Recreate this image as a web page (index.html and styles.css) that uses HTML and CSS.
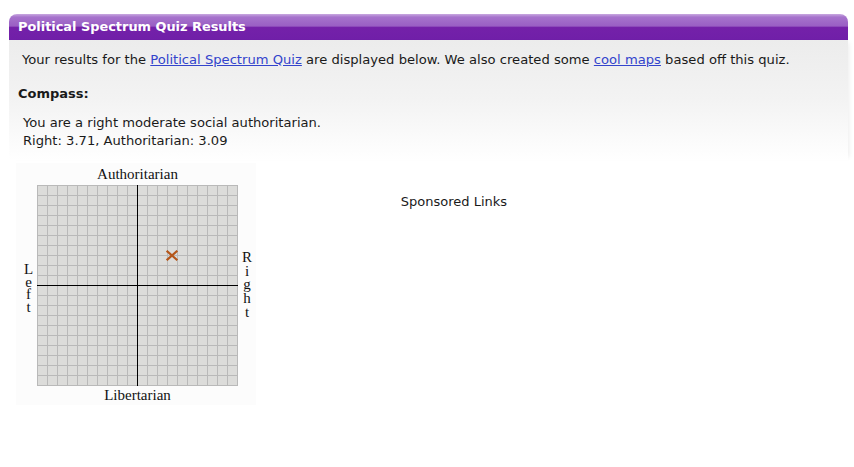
FILE: index.html
```html
<!DOCTYPE html>
<html>
<head>
<meta charset="utf-8">
<link rel="stylesheet" href="styles.css">
</head>
<body>
<div class="page">
  <div class="header">Political Spectrum Quiz Results</div>
  <div class="panel">
    <p class="intro">Your results for the <a href="#">Political Spectrum Quiz</a> are displayed below. We also created some <a href="#">cool maps</a> based off this quiz.</p>
    <h3 class="section">Compass:</h3>
    <p class="result">You are a right moderate social authoritarian.<br>Right: 3.71, Authoritarian: 3.09</p>
  </div>
  <div class="lower">
    <div class="compass">
      <div class="lbl-top">Authoritarian</div>
      <div class="lbl-left"><span class="vtext">Left</span></div>
      <div class="grid">
        <svg class="mark" width="12" height="11" viewBox="0 0 12 11"><path d="M1.5 1.5 L10.5 9.5 M10.5 1.5 L1.5 9.5" stroke="#b4561a" stroke-width="2.2" stroke-linecap="square" fill="none"/></svg>
      </div>
      <div class="lbl-right"><span class="vtext right">Right</span></div>
      <div class="lbl-bottom">Libertarian</div>
    </div>
    <div class="sponsored">Sponsored Links</div>
  </div>
</div>
</body>
</html>
```

FILE: styles.css
```css
html, body {
  margin: 0;
  padding: 0;
  background: #fff;
}
body {
  font-family: "DejaVu Sans", Verdana, sans-serif;
  font-size: 13px;
  color: #1a1a1a;
}
.page {
  padding: 14px 6px 0 9px;
}
.header {
  height: 26px;
  line-height: 26px;
  border-radius: 8px 8px 0 0;
  background: linear-gradient(to bottom, #c8a8e0 0%, #a673cc 12%, #9a5fc4 46%, #7421a9 52%, #701fa8 100%);
  color: #fff;
  font-weight: bold;
  font-size: 12.9px;
  padding-left: 9px;
}
.panel {
  height: 120px;
  background: linear-gradient(to bottom, #ececec 0%, #f3f3f3 50%, #ffffff 100%);
  box-shadow: 4px 0 5px -3px rgba(0,0,0,0.08);
  overflow: hidden;
}
.intro {
  margin: 12px 0 0 13px;
  line-height: 16px;
  font-size: 13.14px;
}
a {
  color: #3344cc;
}
.section {
  margin: 18px 0 0 9px;
  font-size: 13px;
  line-height: 16px;
  font-weight: bold;
}
.result {
  margin: 12px 0 0 14px;
  line-height: 18px;
  font-size: 13.1px;
}
.lower {
  display: flex;
  padding-top: 3px;
}
.compass {
  margin-left: 7px;
  width: 240px;
  display: grid;
  grid-template-columns: 21px 201px 18px;
  grid-template-rows: 22px 201px 19px;
  background: #fcfcfc;
  font-family: "Liberation Serif", "Times New Roman", serif;
  font-size: 15px;
  color: #111;
}
.lbl-top {
  grid-column: 2;
  grid-row: 1;
  text-align: center;
  line-height: 22px;
}
.lbl-bottom {
  grid-column: 2;
  grid-row: 3;
  text-align: center;
  line-height: 19px;
}
.lbl-left, .lbl-right {
  display: flex;
  justify-content: center;
  align-items: flex-start;
}
.vtext {
  writing-mode: vertical-lr;
  text-orientation: upright;
  letter-spacing: -3.5px;
  line-height: 15px;
}
.vtext.right {
  letter-spacing: -2.3px;
}
.lbl-left {
  grid-column: 1;
  grid-row: 2;
  padding-top: 76px;
  padding-left: 3px;
}
.lbl-right {
  grid-column: 3;
  grid-row: 2;
  padding-top: 64px;
  padding-right: 1px;
}
.grid {
  grid-column: 2;
  grid-row: 2;
  position: relative;
  background-color: #dcdcda;
  background-image:
    linear-gradient(to right, #b9b9b9 1px, transparent 1px),
    linear-gradient(to bottom, #b9b9b9 1px, transparent 1px);
  background-size: 10px 10px;
}
.grid::before {
  content: "";
  position: absolute;
  left: 100px;
  top: 0;
  width: 1px;
  height: 201px;
  background: #000;
}
.grid::after {
  content: "";
  position: absolute;
  top: 100px;
  left: 0;
  height: 1px;
  width: 201px;
  background: #000;
}
.mark {
  position: absolute;
  left: 129px;
  top: 65px;
  display: block;
}
.sponsored {
  width: 396px;
  text-align: center;
  padding-top: 31px;
  color: #1a1a1a;
}
```
